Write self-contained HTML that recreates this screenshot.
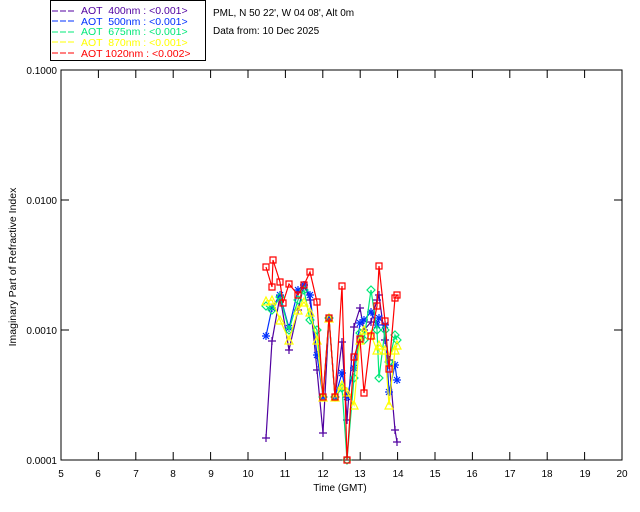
<!DOCTYPE html>
<html><head><style>
body{margin:0;background:#fff;width:640px;height:512px;overflow:hidden}
svg{display:block;font-family:"Liberation Sans",sans-serif}
</style></head><body>
<svg width="640" height="512" viewBox="0 0 640 512">
<defs>
<marker id="mp" markerUnits="userSpaceOnUse" markerWidth="10" markerHeight="10" refX="5" refY="5" overflow="visible"><path d="M1 5h8M5 1v8" stroke="#5000a0" stroke-width="1.2" fill="none"/></marker>
<marker id="mb" markerUnits="userSpaceOnUse" markerWidth="10" markerHeight="10" refX="5" refY="5" overflow="visible"><path d="M1 5h8M5 1v8M2 2l6 6M8 2l-6 6" stroke="#0030ff" stroke-width="1.2" fill="none"/></marker>
<marker id="mg" markerUnits="userSpaceOnUse" markerWidth="10" markerHeight="10" refX="5" refY="5" overflow="visible"><path d="M5 1l4 4-4 4-4-4z" stroke="#00e878" stroke-width="1.2" fill="none"/></marker>
<marker id="my" markerUnits="userSpaceOnUse" markerWidth="10" markerHeight="10" refX="5" refY="5" overflow="visible"><path d="M5 1l4 8h-8z" stroke="#ffff00" stroke-width="1.2" fill="none"/></marker>
<marker id="mr" markerUnits="userSpaceOnUse" markerWidth="10" markerHeight="10" refX="5" refY="5" overflow="visible"><path d="M2 2h6v6h-6z" stroke="#ff0000" stroke-width="1.2" fill="none"/></marker>
</defs>
<rect width="640" height="512" fill="#fff"/>
<rect x="50.5" y="0.5" width="155" height="60" fill="none" stroke="#000"/>
<g font-size="10.5">
<line x1="52" y1="11" x2="74" y2="11" stroke="#5000a0" stroke-dasharray="6,2"/><text x="81" y="14" fill="#5000a0" xml:space="preserve">AOT  400nm : &lt;0.001&gt;</text>
<line x1="52" y1="21" x2="74" y2="21" stroke="#0030ff" stroke-dasharray="6,2"/><text x="81" y="25" fill="#0030ff" xml:space="preserve">AOT  500nm : &lt;0.001&gt;</text>
<line x1="52" y1="32" x2="74" y2="32" stroke="#00e878" stroke-dasharray="6,2"/><text x="81" y="35" fill="#00e878" xml:space="preserve">AOT  675nm : &lt;0.001&gt;</text>
<line x1="52" y1="42" x2="74" y2="42" stroke="#ffff00" stroke-dasharray="6,2"/><text x="81" y="46" fill="#ffff00" xml:space="preserve">AOT  870nm : &lt;0.001&gt;</text>
<line x1="52" y1="53" x2="74" y2="53" stroke="#ff0000" stroke-dasharray="6,2"/><text x="81" y="57" fill="#ff0000" xml:space="preserve">AOT 1020nm : &lt;0.002&gt;</text>
</g>
<g font-size="10">
<text x="213" y="16">PML, N 50 22', W 04 08', Alt 0m</text>
<text x="213" y="34">Data from: 10 Dec 2025</text>
</g>
<rect x="61" y="70" width="561" height="390" fill="none" stroke="#000"/>
<g stroke="#000">
<path d="M98.4 460v-8M135.8 460v-8M173.2 460v-8M210.6 460v-8M248 460v-8M285.4 460v-8M322.8 460v-8M360.2 460v-8M397.6 460v-8M435 460v-8M472.4 460v-8M509.8 460v-8M547.2 460v-8M584.6 460v-8"/>
<path d="M98.4 70v8M135.8 70v8M173.2 70v8M210.6 70v8M248 70v8M285.4 70v8M322.8 70v8M360.2 70v8M397.6 70v8M435 70v8M472.4 70v8M509.8 70v8M547.2 70v8M584.6 70v8"/>
<path d="M61 330h8M61 200h8M622 330h-8M622 200h-8"/>
</g>
<g font-size="10" text-anchor="middle">
<text x="61" y="477">5</text><text x="98" y="477">6</text><text x="136" y="477">7</text><text x="173" y="477">8</text><text x="211" y="477">9</text><text x="248" y="477">10</text><text x="285" y="477">11</text><text x="323" y="477">12</text><text x="360" y="477">13</text><text x="398" y="477">14</text><text x="435" y="477">15</text><text x="472" y="477">16</text><text x="510" y="477">17</text><text x="547" y="477">18</text><text x="585" y="477">19</text><text x="622" y="477">20</text>
<text x="340" y="491">Time (GMT)</text>
</g>
<g font-size="10" text-anchor="end">
<text x="57" y="74">0.1000</text><text x="57" y="204">0.0100</text><text x="57" y="334">0.0010</text><text x="57" y="464">0.0001</text>
</g>
<text font-size="10.5" transform="translate(16 267) rotate(-90)" text-anchor="middle">Imaginary Part of Refractive Index</text>
<g fill="none" stroke-width="1.2">
<polyline stroke="#5000a0" marker-start="url(#mp)" marker-mid="url(#mp)" marker-end="url(#mp)" points="266,438 272,341 280,296 289,350 298,310 304,285 310,300 317,370 323,433 329,318 335,397 342,342 347,420 354,327 360,308 364,330 371,322 377,300 379,295 385,340 389,360 395,430 397,442"/>
<polyline stroke="#0030ff" marker-start="url(#mb)" marker-mid="url(#mb)" marker-end="url(#mb)" points="266,336 272,308 280,295 289,328 298,290 304,285 310,295 317,355 323,397 329,318 335,397 342,373 347,397 354,368 360,323 364,320 371,312 377,325 379,318 385,325 389,392 395,365 397,380"/>
<polyline stroke="#00e878" marker-start="url(#mg)" marker-mid="url(#mg)" marker-end="url(#mg)" points="266,306 272,310 280,297 289,330 298,300 304,290 310,320 317,330 323,397 329,318 335,397 342,388 347,460 354,378 360,333 364,340 371,290 377,330 379,378 385,330 389,362 395,335 397,340"/>
<polyline stroke="#ffff00" marker-start="url(#my)" marker-mid="url(#my)" marker-end="url(#my)" points="266,301 272,300 280,320 289,340 298,310 304,302 310,312 317,340 323,397 329,318 335,397 342,385 347,392 354,405 360,340 364,330 371,335 377,350 379,345 385,350 389,405 395,350 397,345"/>
<polyline stroke="#ff0000" marker-start="url(#mr)" marker-mid="url(#mr)" marker-end="url(#mr)" points="266,267 272,287 273,260 280,282 283,303 289,284 298,295 304,285 310,272 317,302 323,397 329,318 335,397 342,286 347,460 354,357 360,339 364,393 371,336 377,306 379,266 385,321 389,369 395,298 397,295"/>
</g>
</svg>
</body></html>
